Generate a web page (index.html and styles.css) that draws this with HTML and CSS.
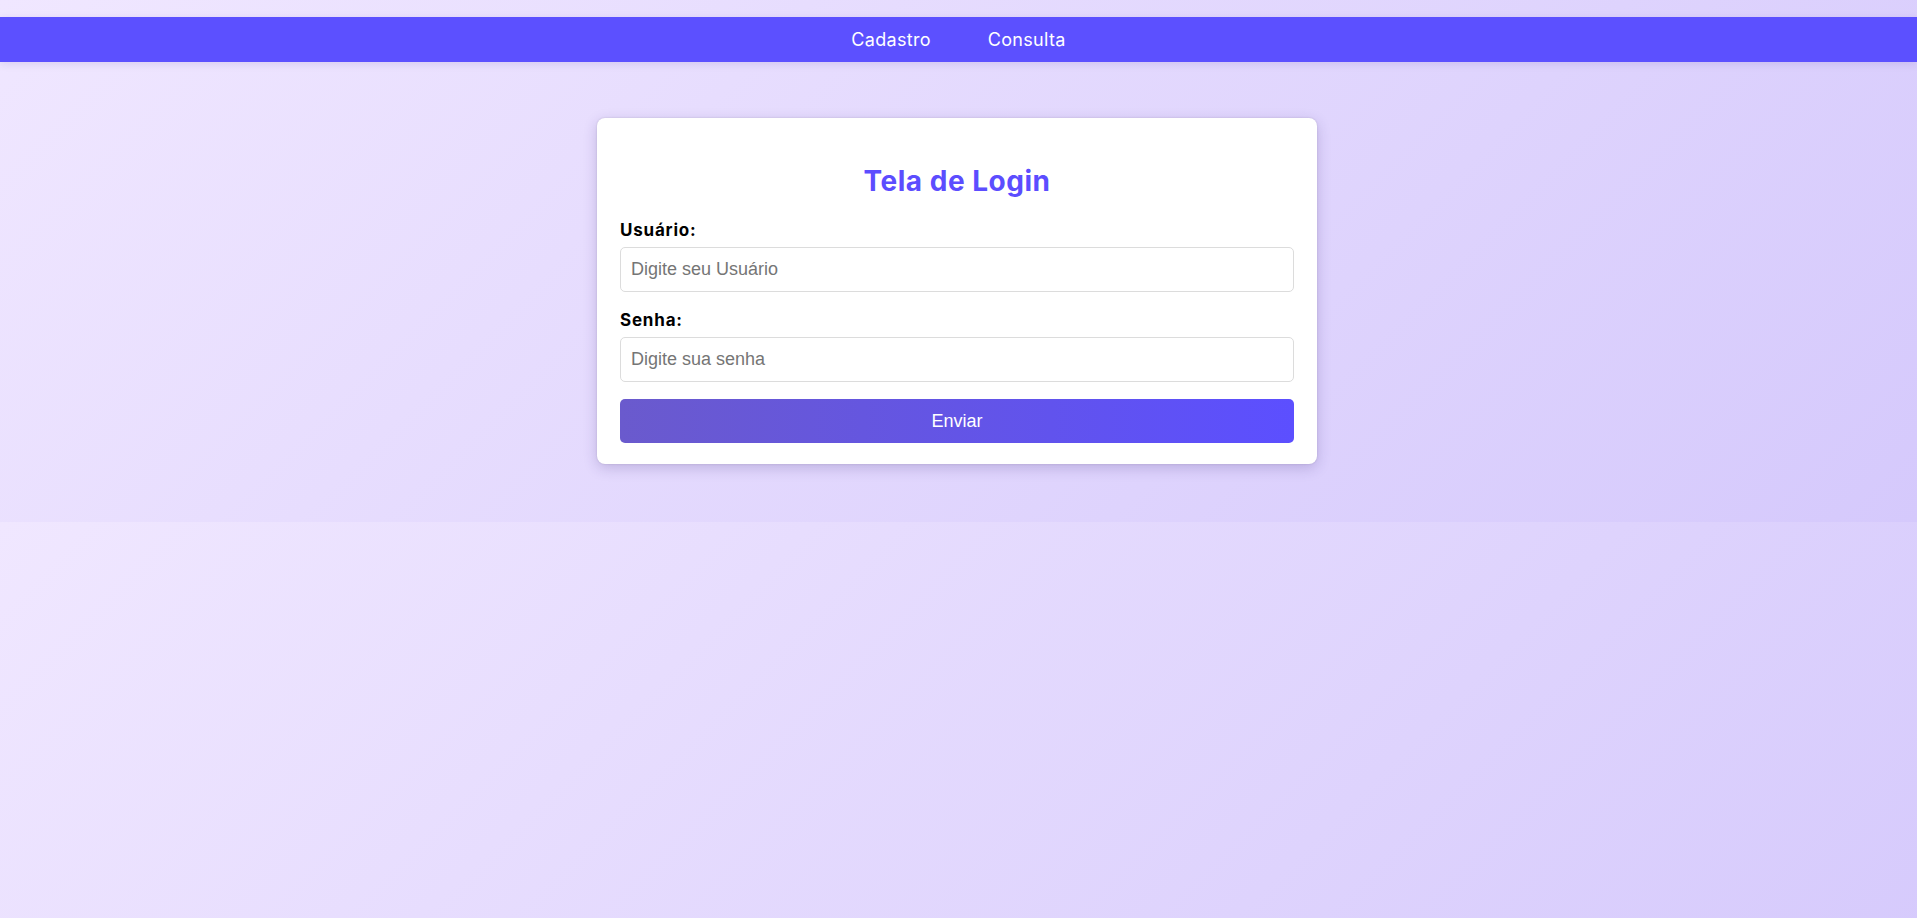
FILE: index.html
```html
<!DOCTYPE html>
<html lang="pt-BR">
<head>
<meta charset="utf-8">
<title>Tela de Login</title>
<link rel="stylesheet" href="styles.css">
</head>
<body>
  <nav class="topnav">
    <a href="#" class="topnav-link">Cadastro</a>
    <a href="#" class="topnav-link">Consulta</a>
  </nav>
  <main class="content">
    <form class="login-card">
      <h2 class="login-title">Tela de Login</h2>
      <label class="field-label" for="usuario">Usuário:</label>
      <input class="field-input" id="usuario" type="text" placeholder="Digite seu Usuário">
      <label class="field-label" for="senha">Senha:</label>
      <input class="field-input" id="senha" type="password" placeholder="Digite sua senha">
      <button class="submit-btn" type="button">Enviar</button>
    </form>
  </main>
</body>
</html>
```

FILE: styles.css
```css
* {
  box-sizing: border-box;
}

body {
  margin: 0;
  padding-top: 17px;
  font-family: "Inter", "Open Sans", sans-serif;
  background: linear-gradient(135deg, #f0e7ff 0%, #d5c9fc 100%);
}

.topnav {
  height: 45px;
  background: #5c50ff;
  display: flex;
  justify-content: center;
  align-items: center;
  gap: 57px;
  box-shadow: 0 2px 8px rgba(60, 40, 140, 0.12);
}

.topnav-link {
  color: #ffffff;
  text-decoration: none;
  font-size: 18px;
  letter-spacing: 0.3px;
  font-weight: 400;
}

.content {
  display: flex;
  justify-content: center;
  padding: 56px 3px 58px 0;
}

.login-card {
  width: 720px;
  background: #ffffff;
  border-radius: 8px;
  padding: 20px 23px 21px;
  display: flex;
  flex-direction: column;
  box-shadow: 0 4px 14px rgba(60, 40, 120, 0.22), 0 0 2px rgba(0, 0, 0, 0.15);
}

.login-title {
  margin: 26px 0 21px;
  text-align: center;
  color: #5c4dff;
  font-size: 28px;
  letter-spacing: 0.5px;
  font-weight: 700;
  line-height: 34px;
}

.field-label {
  font-size: 17px;
  letter-spacing: 0.8px;
  font-weight: 700;
  color: #000000;
  line-height: 23px;
  margin-bottom: 5px;
}

.field-input {
  height: 45px;
  padding: 0 10px;
  border: 1px solid #dcdcdc;
  border-radius: 5px;
  font-family: "Liberation Sans", Arial, sans-serif;
  font-size: 18px;
  color: #333333;
  margin-bottom: 17px;
}

.field-input::placeholder {
  color: #757575;
}

.submit-btn {
  height: 44px;
  border: none;
  border-radius: 5px;
  background: linear-gradient(90deg, #6a5acd 0%, #5c4fff 100%);
  color: #ffffff;
  font-family: "Liberation Sans", Arial, sans-serif;
  font-size: 18px;
  cursor: pointer;
}
```
